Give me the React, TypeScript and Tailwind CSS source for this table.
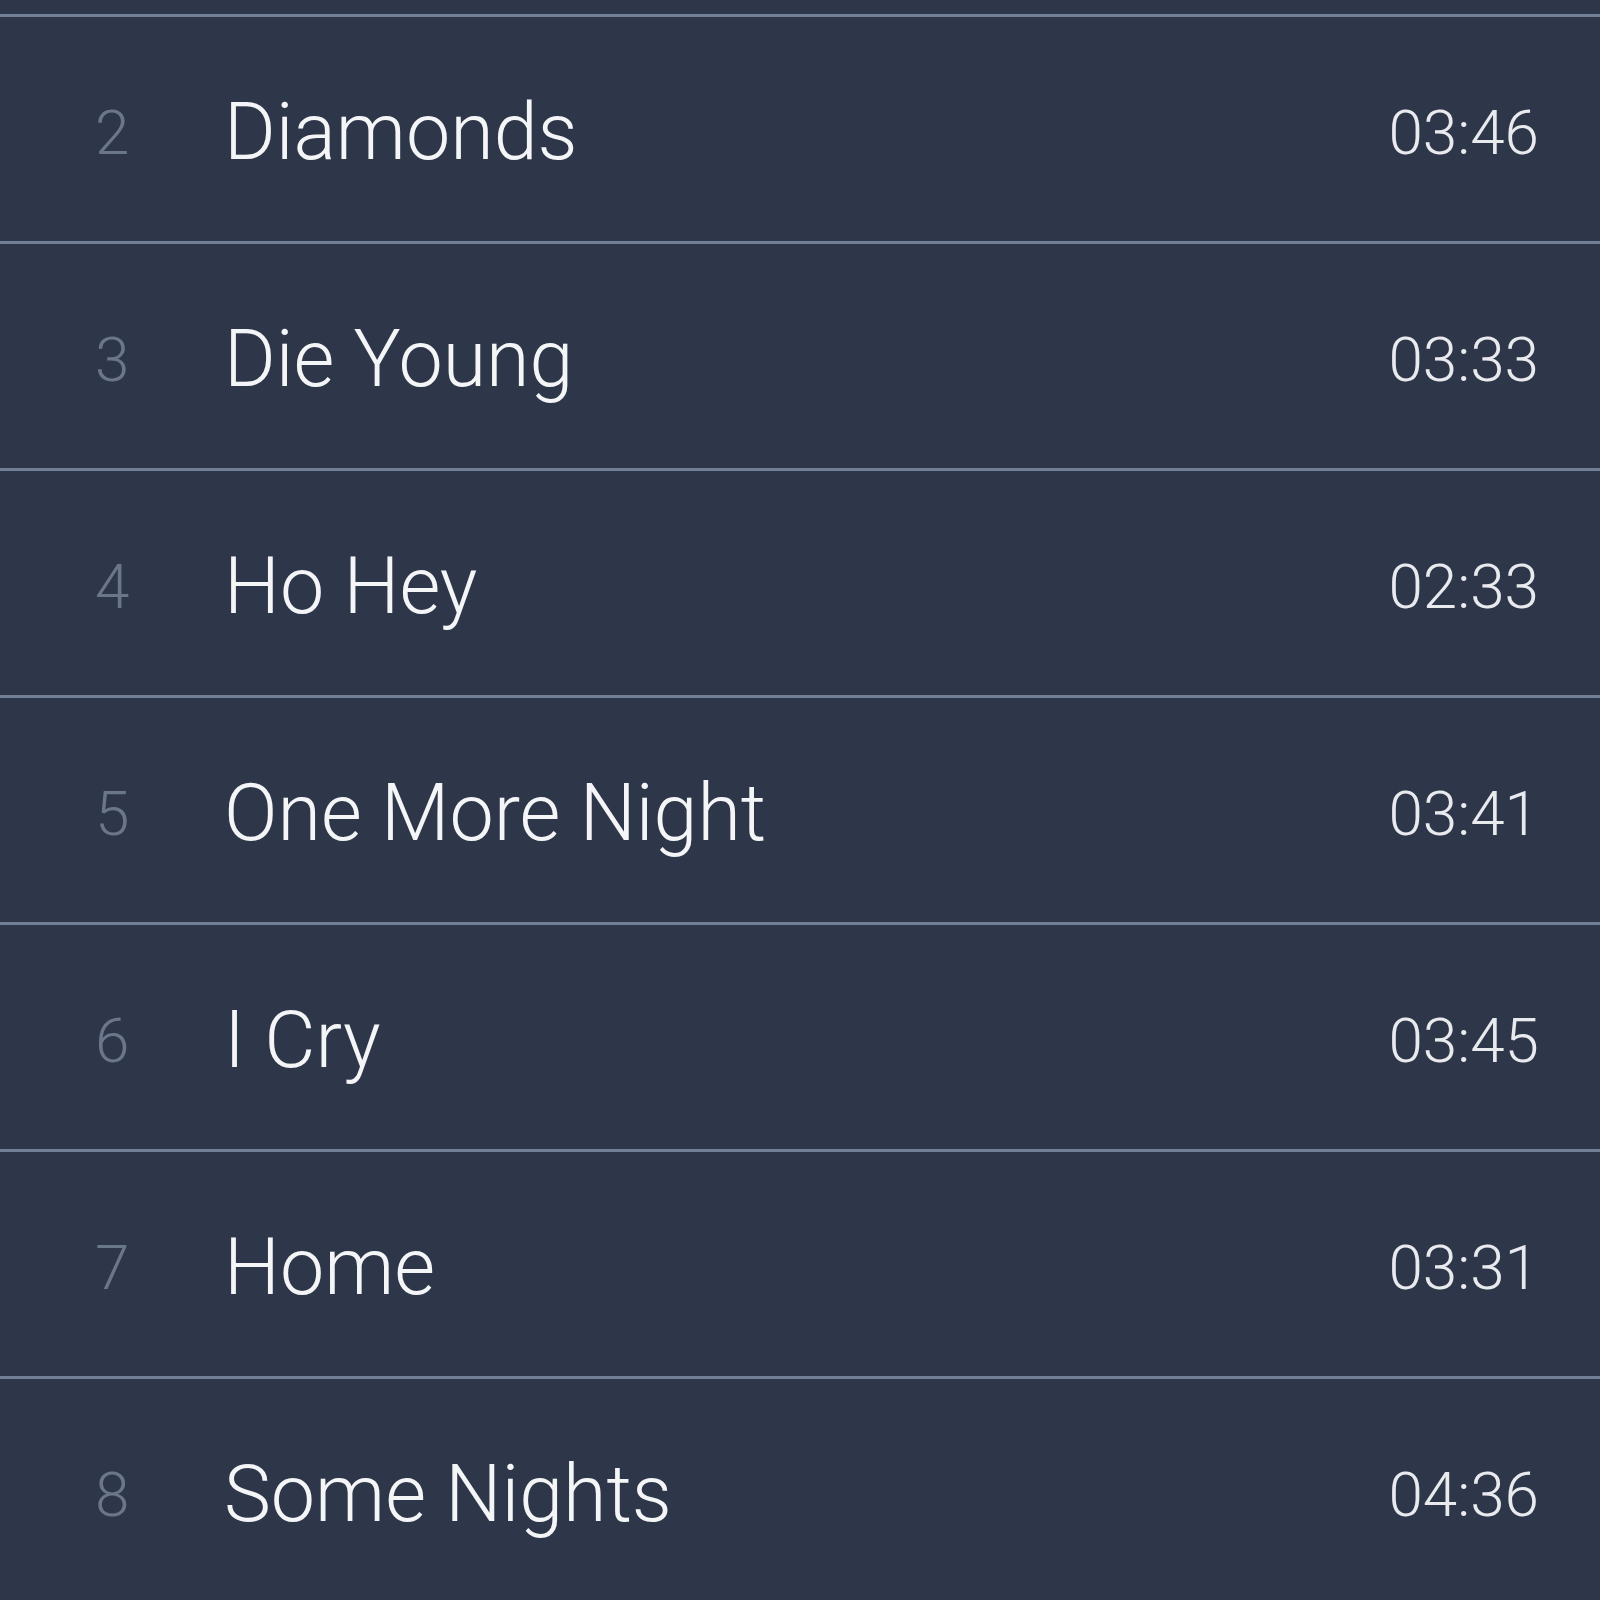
import React from 'react';

const tracks = [
  { n: 2, title: 'Diamonds', time: '03:46' },
  { n: 3, title: 'Die Young', time: '03:33' },
  { n: 4, title: 'Ho Hey', time: '02:33' },
  { n: 5, title: 'One More Night', time: '03:41' },
  { n: 6, title: 'I Cry', time: '03:45' },
  { n: 7, title: 'Home', time: '03:31' },
  { n: 8, title: 'Some Nights', time: '04:36' },
];

export default function App() {
  return (
    <div className="w-[1600px] h-[1600px] overflow-hidden bg-[#2e3649] font-['Roboto',sans-serif]">
      {/* tail of the previous row */}
      <div className="h-[14px]" />
      {tracks.map((t) => (
        <div
          key={t.n}
          className="flex items-center h-[227px] pt-[7px] border-t-[3px] border-[#727f94]"
        >
          <div className="w-[224px] pl-[95px] text-[62px] font-light text-[#6a768a] leading-none">
            {t.n}
          </div>
          <div className="flex-1 text-[79px] font-light text-[#f4f5f7] leading-none">
            {t.title}
          </div>
          <div className="pr-[61px] text-[62px] font-light text-[#e8eaee] leading-none">
            {t.time}
          </div>
        </div>
      ))}
    </div>
  );
}
